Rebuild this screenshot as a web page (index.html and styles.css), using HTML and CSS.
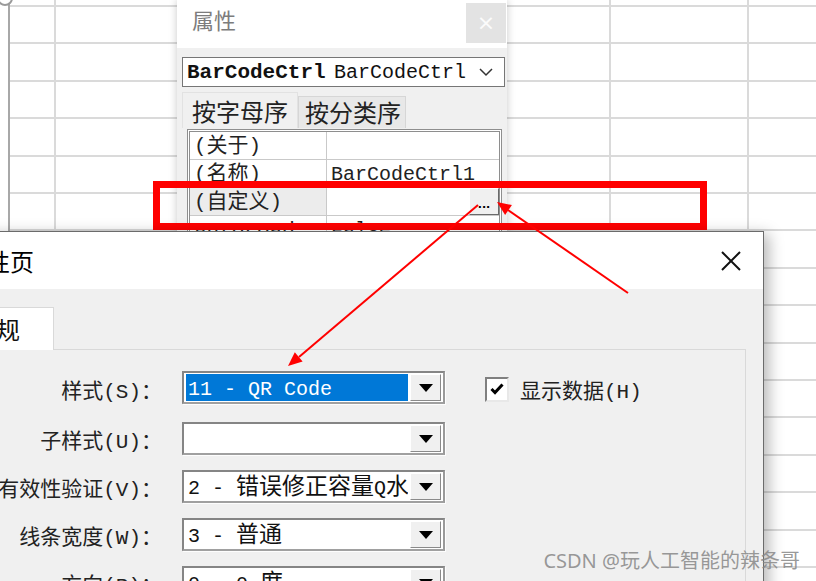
FILE: index.html
```html
<!DOCTYPE html>
<html lang="zh">
<head>
<meta charset="utf-8">
<title>属性页</title>
<link rel="stylesheet" href="styles.css">
</head>
<body>
<span class="sheet-handle"></span>

<section class="props">
  <header class="props-head">
    <h1>属性</h1>
    <button class="props-close">×</button>
  </header>
  <div class="props-body">
    <div class="obj-combo">
      <b>BarCodeCtrl</b><span>BarCodeCtrl</span>
      <svg class="chev" width="14" height="9" viewBox="0 0 14 9"><path d="M1 1 L7 7 L13 1" fill="none" stroke="#333" stroke-width="1.5"/></svg>
    </div>
    <div class="props-tabs">
      <span class="ptab active">按字母序</span>
      <span class="ptab">按分类序</span>
    </div>
    <div class="pgrid">
      <div class="prow"><span class="pk">(关于)</span><span class="pv"></span></div>
      <div class="prow"><span class="pk">(名称)</span><span class="pv">BarCodeCtrl1</span></div>
      <div class="prow selected"><span class="pk">(自定义)</span><span class="pv"><span class="ellipsis">...</span></span></div>
      <div class="prow"><span class="pk">AutoLoad</span><span class="pv">False</span></div>
    </div>
  </div>
</section>

<div class="highlight"></div>

<section class="dialog">
  <header class="dlg-title">
    <h2>属性页</h2>
    <svg width="20" height="20" viewBox="0 0 20 20"><path d="M1 1 L19 19 M19 1 L1 19" stroke="#111" stroke-width="2"/></svg>
  </header>
  <div class="dlg-tabs"><span class="dtab">常规</span></div>
  <div class="dlg-panel">
    <div class="form">
      <label class="lbl">样式(S)：</label>
      <div class="combo first"><span class="val sel">11 - QR Code</span><span class="drop"><i class="tri"></i></span></div>
      <div class="check">
        <span class="box"><svg width="14" height="12" viewBox="0 0 14 12"><path d="M1.5 6 L5 9.5 L12.5 1.5" fill="none" stroke="#000" stroke-width="3"/></svg></span>
        <span>显示数据(H)</span>
      </div>

      <label class="lbl">子样式(U)：</label>
      <div class="combo"><span class="val"></span><span class="drop"><i class="tri"></i></span></div>
      <span></span>

      <label class="lbl">有效性验证(V)：</label>
      <div class="combo"><span class="val">2 - <span class="cjk">错误修正容量</span>Q<span class="cjk">水平</span></span><span class="drop"><i class="tri"></i></span></div>
      <span></span>

      <label class="lbl">线条宽度(W)：</label>
      <div class="combo"><span class="val">3 - <span class="cjk">普通</span></span><span class="drop"><i class="tri"></i></span></div>
      <span></span>

      <label class="lbl">方向(R)：</label>
      <div class="combo"><span class="val">0 - 0 <span class="cjk">度</span></span><span class="drop"><i class="tri"></i></span></div>
      <span></span>
    </div>
  </div>
</section>

<svg class="arrows" width="816" height="581" viewBox="0 0 816 581">
  <line x1="478" y1="205" x2="299" y2="357" stroke="#ff0000" stroke-width="2"/>
  <polygon points="288,366 302.6,361.5 294.8,352.3" fill="#ff0000"/>
  <line x1="628" y1="293" x2="508" y2="210" stroke="#ff0000" stroke-width="2"/>
  <polygon points="497,202 511.9,205.1 505.1,214.9" fill="#ff0000"/>
</svg>

<div class="watermark">CSDN @玩人工智能的辣条哥</div>
</body>
</html>
```

FILE: styles.css
```css
html, body {
  margin: 0;
  padding: 0;
}

body {
  width: 816px;
  height: 581px;
  overflow: hidden;
  position: relative;
  background-color: #fff;
  background-image:
    linear-gradient(to right, transparent 8px, #a8a8a8 8px, #a8a8a8 10px, transparent 10px),
    linear-gradient(to right, #fff 8px, transparent 8px),
    linear-gradient(to right, transparent 54px, #dadada 54px, #dadada 56px, transparent 56px, transparent 609px, #dadada 609px, #dadada 611px, transparent 611px, transparent 747px, #dadada 747px, #dadada 749px, transparent 749px),
    repeating-linear-gradient(to bottom, transparent 0, transparent 5px, #dadada 5px, #dadada 7px, transparent 7px, transparent 37.4px);
  font-family: "Noto Sans CJK SC", sans-serif;
}

.sheet-handle {
  position: absolute;
  left: -3px;
  top: -10px;
  width: 12px;
  height: 12px;
  border: 2px solid #9a9a9a;
  border-radius: 50%;
  background: #fff;
}

/* ---------- Properties panel ---------- */
.props {
  position: absolute;
  left: 177px;
  top: 0;
  width: 330px;
  height: 250px;
  background: #f0f0f0;
  box-shadow: 0 0 8px rgba(0, 0, 0, 0.22);
}

.props-head {
  height: 48px;
  box-sizing: border-box;
  background: #fff;
  display: flex;
  justify-content: space-between;
  align-items: flex-start;
  padding: 3px 1px 0 15px;
}

.props-head h1 {
  margin: 0;
  font-size: 22px;
  font-weight: 400;
  line-height: 33px;
  color: #7c7c7c;
}

.props-close {
  width: 40px;
  height: 40px;
  padding: 0;
  border: 0;
  background: #e3e3e3;
  color: #fbfbfb;
  font-family: "DejaVu Sans", sans-serif;
  font-size: 22px;
  line-height: 40px;
}

.props-body {
  padding: 9px 2px 0 5px;
}

.obj-combo {
  height: 30px;
  box-sizing: border-box;
  border: 1px solid #767676;
  background: #fff;
  display: flex;
  align-items: center;
  padding-left: 4px;
  font-family: "Liberation Mono", monospace;
  white-space: nowrap;
  overflow: hidden;
  color: #111;
}

.obj-combo b {
  font-size: 21px;
  width: 143px;
  overflow: hidden;
  flex: none;
}

.obj-combo span {
  font-size: 20px;
  margin-left: 4px;
  flex: 1;
}

.chev {
  margin-right: 11px;
  flex: none;
}

.props-tabs {
  display: flex;
  align-items: flex-end;
  height: 35px;
  margin-top: 6px;
}

.ptab {
  font-size: 24px;
  line-height: 30px;
  height: 31px;
  padding: 0 4px 0 6px;
  border: 1px solid #d6d6d6;
  border-bottom: 0;
  background: #e8e8e8;
  color: #222;
}

.ptab.active {
  height: 35px;
  line-height: 35px;
  padding: 0 9px;
  background: #f0f0f0;
  border-color: #e2e2e2;
}

.pgrid {
  margin: 1px 0 0 5px;
  width: 315px;
  box-sizing: border-box;
  border: 3px double #8e8e8e;
  background: #fff;
}

.prow {
  display: flex;
  height: 28px;
  box-sizing: border-box;
  border-bottom: 1px solid #c9c9c9;
}

.pk {
  width: 137px;
  flex: none;
  box-sizing: border-box;
  border-right: 1px solid #c9c9c9;
  padding-left: 4px;
  font-family: "Liberation Mono", "Noto Sans CJK SC", monospace;
  font-size: 21px;
  line-height: 29px;
  color: #222;
  white-space: nowrap;
}

.pv {
  flex: 1;
  display: flex;
  justify-content: space-between;
  padding-left: 4px;
  font-family: "Liberation Mono", monospace;
  font-size: 20px;
  line-height: 29px;
  color: #222;
}

.prow.selected .pk {
  background: #ececec;
}

.ellipsis {
  margin-left: auto;
  width: 30px;
  height: 27px;
  box-sizing: border-box;
  background: #f0f0f0;
  border: 1px solid;
  border-color: #fff #6a6a6a #6a6a6a #fff;
  font-family: "DejaVu Sans", sans-serif;
  font-weight: 700;
  font-size: 11px;
  line-height: 1;
  text-align: center;
  padding-top: 10px;
  color: #000;
}

/* ---------- Red highlight ---------- */
.highlight {
  position: absolute;
  left: 153px;
  top: 181px;
  width: 554px;
  height: 49px;
  box-sizing: border-box;
  border: 7px solid #ff0000;
}

/* ---------- Dialog ---------- */
.dialog {
  position: absolute;
  left: -61px;
  top: 231px;
  width: 825px;
  height: 380px;
  box-sizing: border-box;
  border: 1px solid #6b6b6b;
  background: #f0f0f0;
  box-shadow: 5px 3px 14px rgba(0, 0, 0, 0.28);
  display: flex;
  flex-direction: column;
}

.dlg-title {
  height: 57px;
  flex: none;
  background: #fff;
  display: flex;
  align-items: center;
  justify-content: space-between;
  padding: 0 22px;
}

.dlg-title h2 {
  margin: 0;
  font-size: 24px;
  font-weight: 400;
  color: #000;
}

.dlg-tabs {
  display: flex;
  align-items: flex-end;
  height: 60px;
  box-sizing: border-box;
  padding: 17px 0 0 11px;
  flex: none;
}

.dtab {
  position: relative;
  z-index: 1;
  height: 43px;
  box-sizing: border-box;
  margin-bottom: -1px;
  padding: 0 33px 0 20px;
  background: #fff;
  border: 1px solid #d9d9d9;
  border-bottom: 0;
  font-size: 24px;
  line-height: 42px;
  color: #111;
}

.dlg-panel {
  flex: 1;
  margin: 0 17px 0 11px;
  border: 1px solid #d9d9d9;
  padding-top: 21px;
}

.form {
  display: grid;
  grid-template-columns: 210px 263px 1fr;
  grid-template-rows: 36px 33px 33px 33px 33px;
  column-gap: 20px;
  row-gap: 15px;
  align-items: center;
}

.lbl {
  text-align: right;
  font-family: "Liberation Mono", "Noto Sans CJK SC", monospace;
  font-size: 21px;
  color: #222;
  white-space: nowrap;
}

.combo {
  display: flex;
  gap: 2px;
  height: 33px;
  box-sizing: border-box;
  padding: 1px 2px;
  border: 2px solid;
  border-color: #858585 #9a9a9a #a0a0a0 #858585;
  box-shadow: 1px 1px 0 #fdfdfd;
  background: #fff;
}

.combo.first {
  align-self: start;
}

.val {
  flex: 1;
  overflow: hidden;
  white-space: nowrap;
  padding-left: 2px;
  font-family: "Liberation Mono", monospace;
  font-size: 20px;
  line-height: 31px;
  color: #111;
}

.val.sel {
  background: #0078d7;
  color: #fff;
}

.cjk {
  font-family: "Noto Sans CJK SC", sans-serif;
  font-size: 23px;
  line-height: 1;
}

.drop {
  width: 31px;
  flex: none;
  box-sizing: border-box;
  background: #f0f0f0;
  border: 1px solid;
  border-color: #fff #8a8a8a #8a8a8a #fff;
  display: flex;
  align-items: center;
  justify-content: center;
}

.tri {
  width: 0;
  height: 0;
  border-left: 7px solid transparent;
  border-right: 7px solid transparent;
  border-top: 8px solid #000;
}

.check {
  display: flex;
  align-items: center;
  gap: 11px;
  margin-left: 20px;
  font-family: "Liberation Mono", "Noto Sans CJK SC", monospace;
  font-size: 21px;
  color: #222;
}

.box {
  width: 24px;
  height: 25px;
  flex: none;
  box-sizing: border-box;
  border: 2px solid;
  border-color: #808080 #e8e8e8 #e8e8e8 #808080;
  background: #fff;
  display: flex;
  align-items: center;
  justify-content: center;
}

/* ---------- Overlays ---------- */
.arrows {
  position: absolute;
  left: 0;
  top: 0;
  pointer-events: none;
}

.watermark {
  position: absolute;
  right: 16px;
  bottom: 7px;
  font-family: "Noto Sans", "Noto Sans CJK SC", sans-serif;
  font-size: 20px;
  color: rgba(135, 135, 135, 0.85);
  white-space: nowrap;
}
```
